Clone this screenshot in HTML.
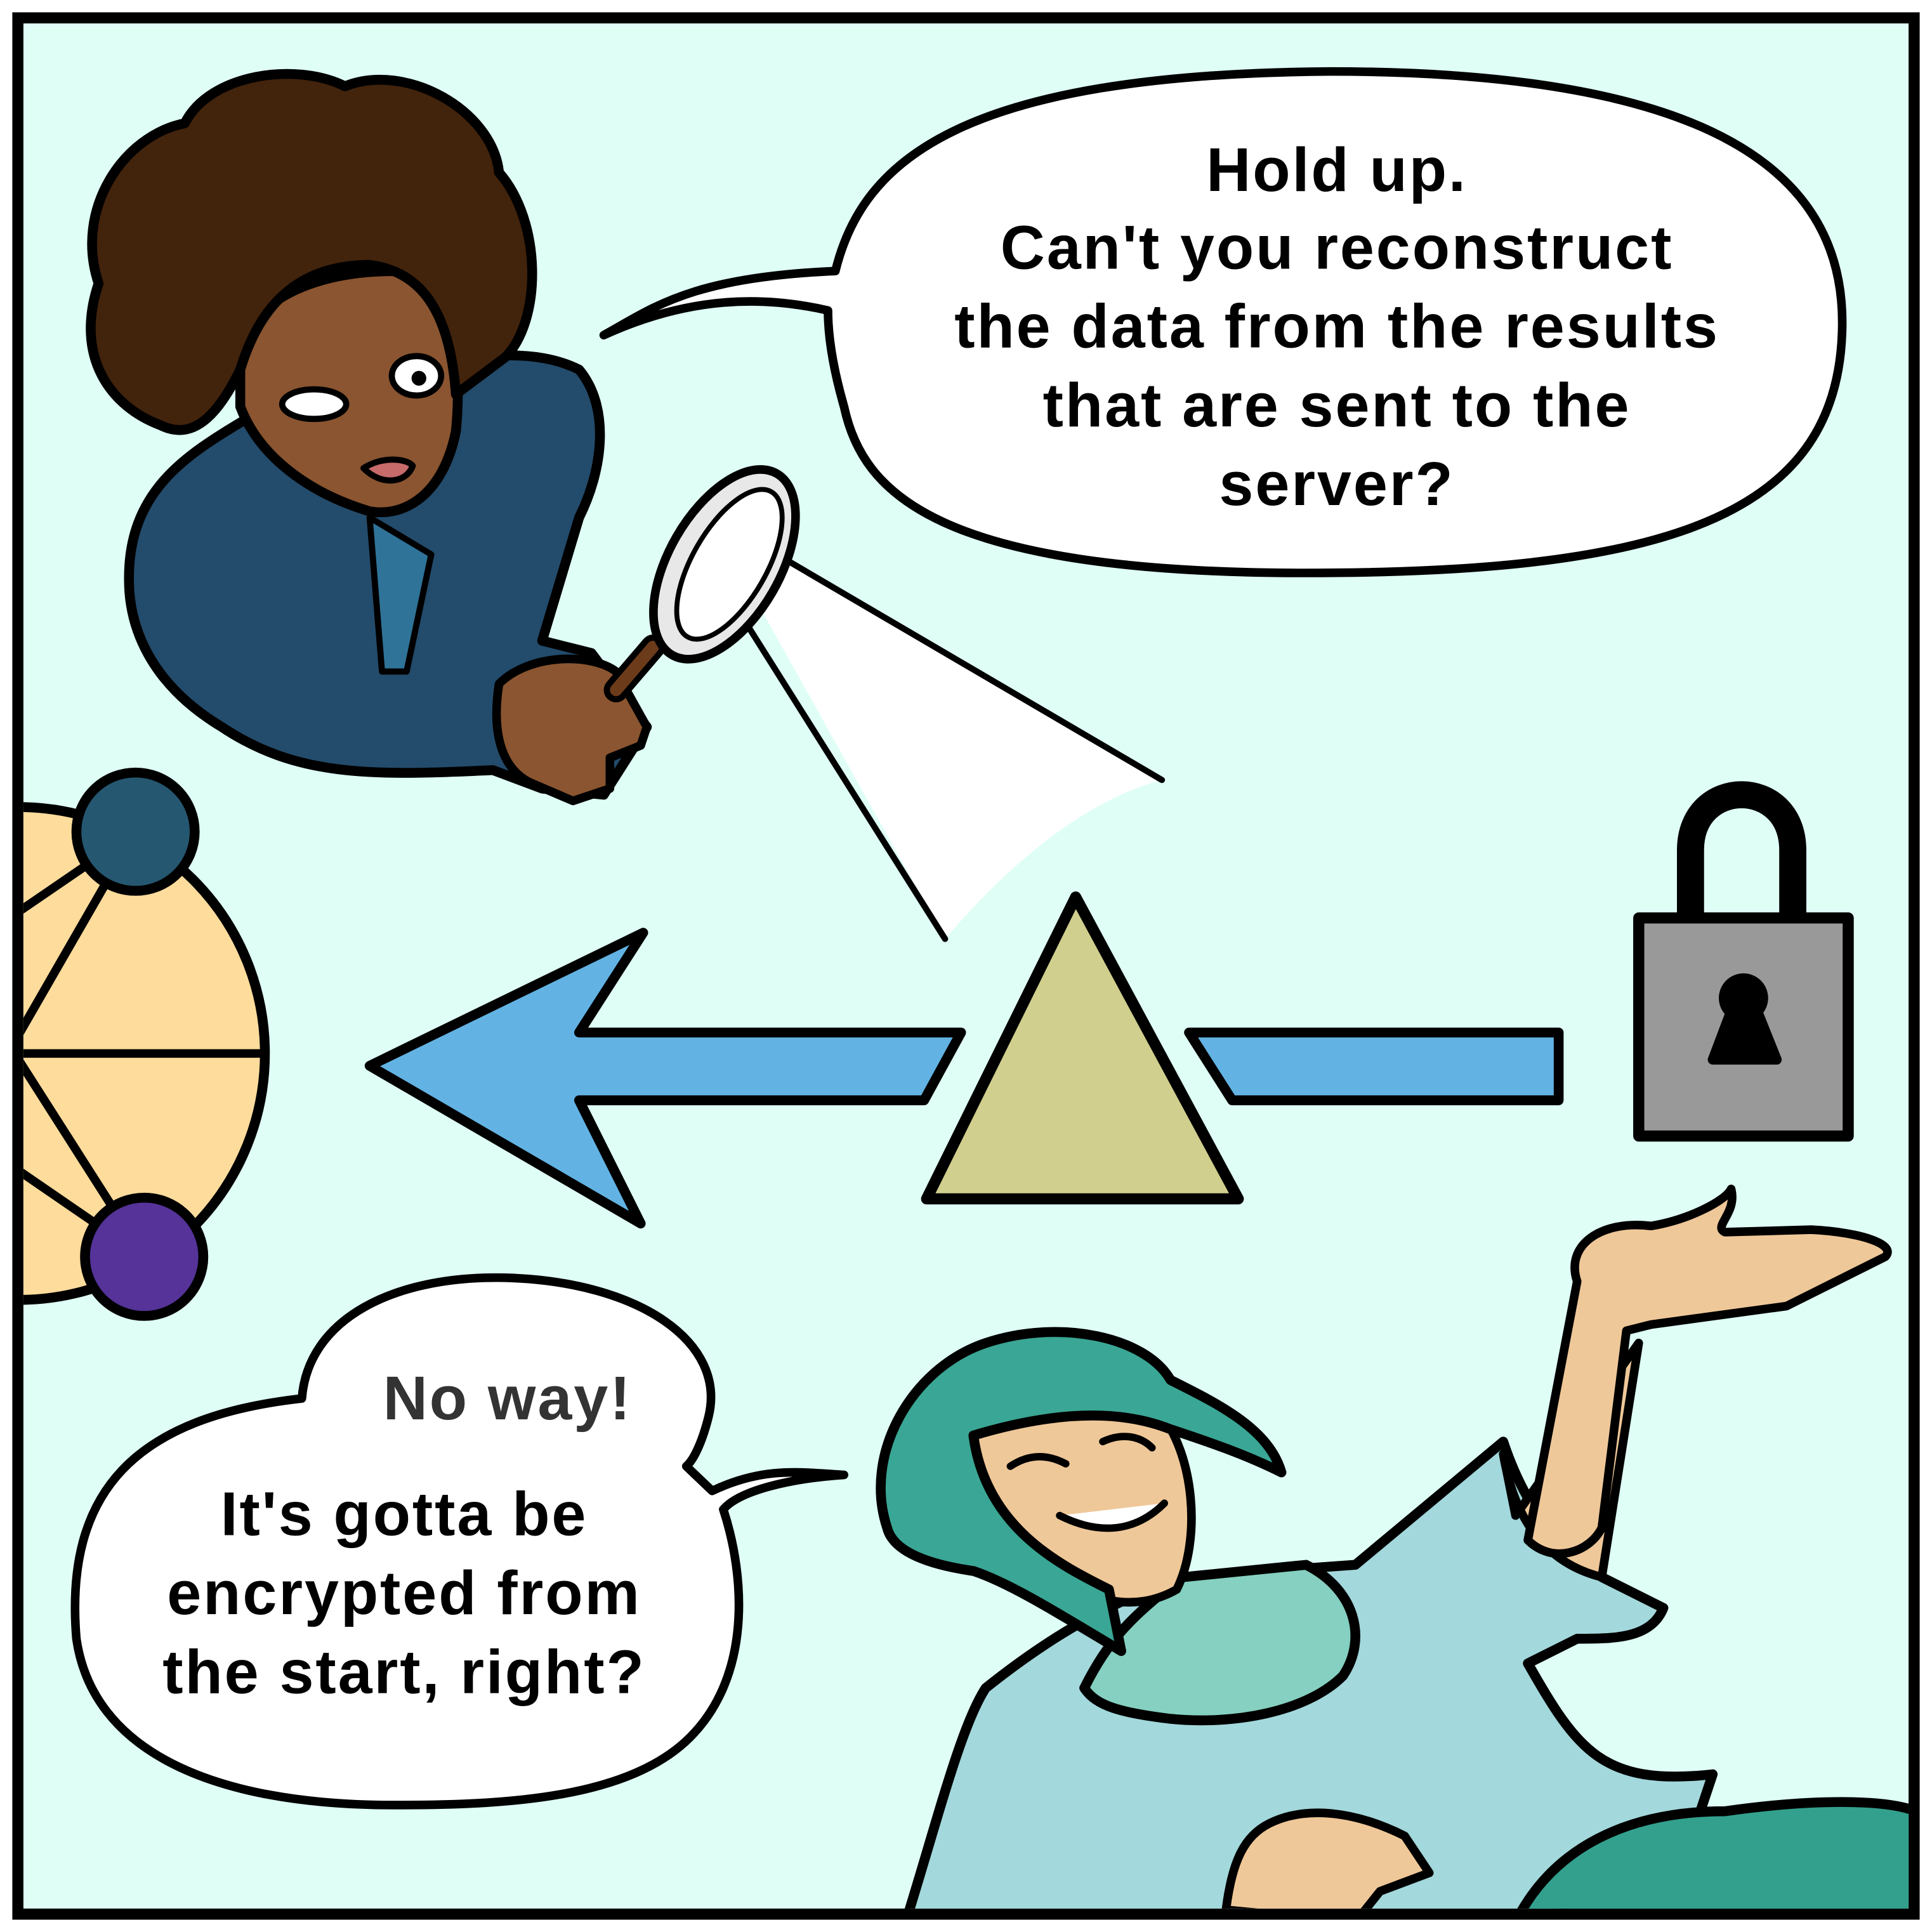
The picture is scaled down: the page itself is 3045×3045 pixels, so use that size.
<!DOCTYPE html>
<html><head><meta charset="utf-8"><style>
html,body{margin:0;padding:0;background:#fff}
svg{display:block}
text{font-family:"Liberation Sans",sans-serif;font-size:50px;font-weight:bold;letter-spacing:1.5px;fill:#000;text-anchor:middle}
</style></head><body>
<svg width="3045" height="3045" viewBox="0 0 1568 1568" xmlns="http://www.w3.org/2000/svg">
<defs><clipPath id="c"><rect x="19" y="19" width="1530" height="1530"/></clipPath></defs>
<rect x="0" y="0" width="1568" height="1568" fill="#fff"/>
<rect x="14.5" y="14.5" width="1539" height="1539" fill="#dffff6" stroke="#000" stroke-width="9"/>
<g clip-path="url(#c)" stroke="#000" stroke-width="8" stroke-linejoin="round" stroke-linecap="round">
<circle cx="15" cy="855" r="200" fill="#fedc9c"/>
<path d="M15 740 L110 675 L15 840 M15 855 H215 M15 860 L117 1020 L15 950" fill="none" stroke-width="7"/>
<circle cx="110" cy="675" r="48" fill="#255770"/>
<circle cx="117" cy="1020" r="48" fill="#553399"/>
<path d="M590 445 L610 435 L943 633 C880 650 820 700 767 762 Z" fill="#fff" stroke="none"/>
<path d="M605 435 L943 633 M583 470 L767 762" fill="none" stroke-width="5"/>
<path d="M300 865 L522 757 L470 838 L780 838 L750 893 L470 893 L520 993 Z" fill="#62b3e3"/>
<path d="M965 838 L1265 838 L1265 893 L1000 893 Z" fill="#62b3e3"/>
<path d="M873 728 L1005 973 L752 973 Z" fill="#d0cf8e" stroke-width="9"/>
<path d="M1372 745 V690 C1372 630 1455 630 1455 690 V745" fill="none" stroke-width="22"/>
<rect x="1330" y="745" width="170" height="177" fill="#999" stroke-width="9"/>
<circle cx="1415" cy="810" r="16" fill="#000"/>
<path d="M1407 815 L1390 860 H1442 L1424 815 Z" fill="#000"/>
<path d="M678 220 C700 130 780 60 1080 58 C1390 58 1500 140 1495 270 C1490 420 1350 465 1060 465 C760 465 700 400 685 330 C675 295 672 270 672 252 C620 240 560 240 490 272 C530 250 560 225 678 220 Z" fill="#fff" stroke-width="7"/>
<path d="M105 480 C100 400 150 370 200 340 L310 300 C380 290 430 280 470 300 C495 330 490 380 470 420 L440 520 L480 530 L525 590 L490 645 L440 640 L400 625 C300 630 240 630 180 590 C130 560 108 520 105 480 Z" fill="#234b6b"/>
<path d="M300 420 L350 450 L330 545 L310 545 Z" fill="#2f7398" stroke-width="5"/>
<path d="M195 280 C210 240 260 220 320 220 C370 230 375 300 370 350 C360 400 330 420 300 415 C250 400 210 370 195 330 Z" fill="#8a5530"/>
<path d="M80 230 C60 170 100 110 150 100 C170 60 240 50 280 70 C330 50 400 90 405 140 C440 180 440 260 410 290 L370 320 C365 250 340 220 300 215 C240 215 210 250 195 300 C180 330 160 360 130 345 C90 330 60 290 80 230 Z" fill="#42230c"/>
<ellipse cx="255" cy="328" rx="26" ry="12" fill="#fff" stroke-width="5"/>
<ellipse cx="338" cy="305" rx="20" ry="16" fill="#fff" stroke-width="5"/>
<circle cx="340" cy="307" r="6" fill="#000" stroke="none"/>
<path d="M295 380 C310 370 330 372 335 378 C330 392 310 395 295 380 Z" fill="#c76a6a" stroke-width="5"/>
<path d="M405 555 C430 530 480 530 500 545 L525 590 L520 605 L495 615 L495 640 L465 650 L430 635 C410 625 398 600 405 555 Z" fill="#8a5530" stroke-width="7"/>
<path d="M500 560 L530 525" stroke="#000" stroke-width="20"/>
<path d="M500 560 L530 525" stroke="#6b3b1a" stroke-width="10"/>
<ellipse cx="588" cy="458" rx="45" ry="85" transform="rotate(30 588 458)" fill="#e8e8e8" stroke-width="7"/>
<ellipse cx="592" cy="458" rx="30" ry="68" transform="rotate(30 592 458)" fill="#fff" stroke-width="4"/>
<path d="M245 1135 C250 1070 320 1035 410 1037 C520 1040 590 1090 575 1150 C570 1170 563 1185 557 1190 L578 1210 C620 1190 650 1195 685 1197 C640 1200 600 1210 587 1225 C605 1280 610 1360 560 1410 C510 1460 410 1465 320 1465 C170 1465 75 1420 62 1330 C52 1210 110 1150 245 1135 Z" fill="#fff" stroke-width="7"/>
<path d="M735 1560 C760 1480 780 1400 800 1370 C850 1330 900 1300 960 1280 L1100 1270 L1220 1170 C1240 1230 1270 1260 1300 1280 L1350 1305 C1340 1330 1310 1330 1280 1330 L1240 1350 C1280 1420 1300 1450 1390 1440 L1380 1470 L1250 1560 Z" fill="#a3d8dc"/>
<path d="M1230 1560 C1260 1500 1320 1470 1400 1470 C1470 1460 1530 1460 1555 1470 L1555 1560 Z" fill="#33a08e"/>
<path d="M1220 1180 C1230 1240 1260 1270 1300 1280 L1330 1090 L1230 1230 Z" fill="#efc899" stroke-width="7"/>
<path d="M1240 1250 L1280 1040 C1270 1010 1300 990 1340 995 C1370 990 1400 975 1405 965 C1410 985 1390 995 1400 1000 L1470 998 C1510 1000 1540 1010 1530 1020 L1450 1060 L1340 1075 L1320 1080 L1300 1240 C1290 1260 1260 1270 1240 1250 Z" fill="#efc899" stroke-width="7"/>
<path d="M880 1370 C900 1330 920 1310 960 1280 L1060 1270 C1100 1290 1110 1330 1090 1360 C1060 1390 1000 1400 950 1395 C910 1390 890 1385 880 1370 Z" fill="#85d0c0"/>
<path d="M785 1165 C800 1120 880 1115 940 1145 C970 1180 975 1250 955 1290 C920 1310 880 1300 850 1270 C810 1240 790 1210 785 1165 Z" fill="#efc899" stroke-width="7"/>
<path d="M720 1240 C700 1180 740 1110 800 1090 C860 1070 930 1085 950 1120 C990 1140 1030 1160 1040 1195 C1010 1180 980 1170 950 1160 C900 1140 840 1150 790 1165 C800 1240 860 1270 900 1290 L910 1340 C860 1310 820 1285 790 1275 C755 1270 725 1260 720 1240 Z" fill="#3aa695"/>
<path d="M860 1230 C890 1245 920 1245 945 1220" fill="#fff" stroke-width="6"/>
<path d="M820 1190 C835 1180 850 1180 865 1188 M895 1170 C910 1163 925 1165 935 1175" fill="none" stroke-width="6"/>
<path d="M995 1550 C1000 1510 1010 1490 1030 1480 C1060 1465 1100 1470 1140 1490 L1160 1520 L1120 1535 L1100 1560 Z" fill="#efc899" stroke-width="7"/>
</g>
<text x="1085" y="155">Hold up.</text>
<text x="1085" y="218">Can't you reconstruct</text>
<text x="1085" y="282">the data from the results</text>
<text x="1085" y="346">that are sent to the</text>
<text x="1085" y="410">server?</text>
<text x="412" y="1152" style="fill:#333">No way!</text>
<text x="328" y="1246">It's gotta be</text>
<text x="328" y="1310">encrypted from</text>
<text x="328" y="1374">the start, right?</text>
</svg>
</body></html>
